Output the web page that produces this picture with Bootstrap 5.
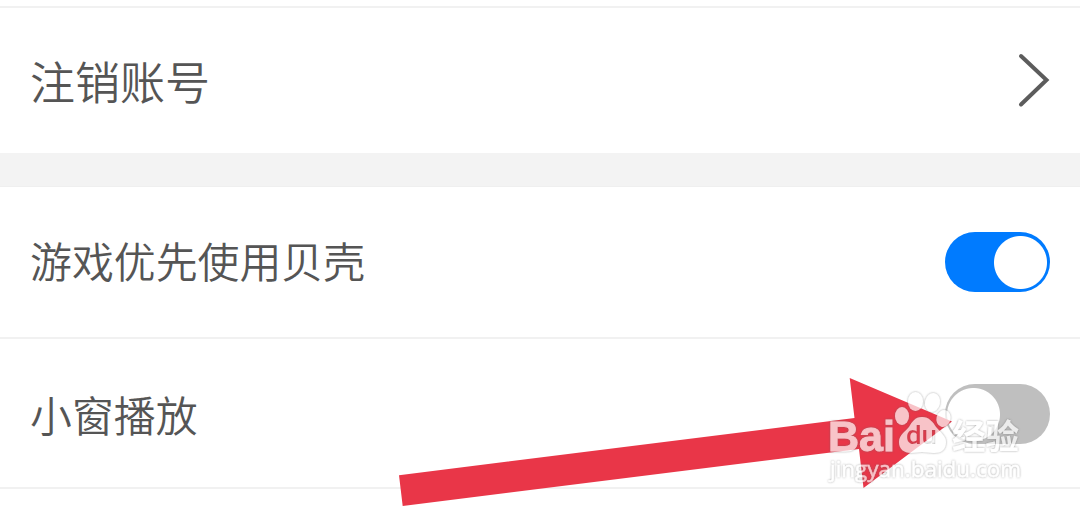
<!DOCTYPE html>
<html lang="zh-CN">
<head>
<meta charset="UTF-8">
<meta name="viewport" content="width=device-width, initial-scale=1">
<title>设置</title>
<link href="https://cdn.jsdelivr.net/npm/bootstrap@5.3.3/dist/css/bootstrap.min.css" rel="stylesheet">
<style>
  body {
    font-family: "Noto Sans CJK SC", sans-serif;
    font-weight: 350;
    color: #555;
    background: #fff;
  }
  .screen { height: 507px; }
  .settings-row {
    padding: 0 30px;
    font-size: 41.9px;
    line-height: 1;
    border-bottom: 2px solid #f1f1f1;
  }
  .strip-top { height: 8px; border-bottom: 2px solid #f1f1f1; }
  .row-account { height: 145px; font-size: 45px; border-bottom: 0; }
  .row-game { height: 152px; }
  .row-game label { padding-bottom: 5px; }
  .row-window { height: 150px; padding-top: 2px; }
  .row-window label { padding-bottom: 1px; }
  .section-gap { height: 34px; background: #f3f3f3; border-bottom: 1px solid #efefef; }
  .form-switch .form-check-input.toggle {
    width: 105px;
    height: 60px;
    margin: 0;
    border: 0;
    border-radius: 30px;
    background-color: #bfbfbf;
    background-image: radial-gradient(circle at 28.5px 30.5px, #fff 26px, transparent 27px);
    background-position: 0 0;
    background-size: 100% 100%;
    box-shadow: none;
  }
  .form-switch .form-check-input.toggle:checked {
    background-color: #007bff;
    background-image: radial-gradient(circle at 75.5px 30.5px, #fff 26px, transparent 27px);
  }
  .overlay { pointer-events: none; }
  .wm-latin { font-family: "Liberation Sans", sans-serif; font-weight: 700; }
  .wm-du { font-family: Roboto, sans-serif; font-weight: 500; }
  .wm-url { font-family: "Open Sans", sans-serif; font-weight: 400; }
  .wm-cn { font-family: "Noto Sans CJK SC", sans-serif; font-weight: 700; }
</style>
</head>

<body>

<div class="screen position-relative overflow-hidden">
  <div class="strip-top"></div>

  <div class="settings-row row-account d-flex align-items-center justify-content-between">
    <span>注销账号</span>
    <svg width="32" height="56" viewBox="0 0 32 56" fill="none" stroke="#5c5c5c" stroke-width="4" stroke-linecap="round">
      <path d="M3 3 28.5 27 3 51.500"/>
    </svg>
  </div>

  <div class="section-gap"></div>

  <div class="settings-row row-game d-flex align-items-center justify-content-between">
    <label for="game">游戏优先使用贝壳</label>
    <div class="form-check form-switch d-flex p-0 m-0">
      <input class="form-check-input toggle" type="checkbox" role="switch" id="game" checked>
    </div>
  </div>

  <div class="settings-row row-window d-flex align-items-center justify-content-between">
    <label for="window">小窗播放</label>
    <div class="form-check form-switch d-flex p-0 m-0">
      <input class="form-check-input toggle" type="checkbox" role="switch" id="window">
    </div>
  </div>

  <!-- arrow and watermark lie over the list -->
  <svg class="overlay position-absolute top-0 start-0" width="1080" height="507" viewBox="0 0 1080 507">
    <defs>
      <filter id="edge" x="-5%" y="-10%" width="110%" height="120%">
        <feDropShadow dx="0" dy="0" stdDeviation="0.9" flood-color="#666" flood-opacity="0.85"/>
      </filter>
      <mask id="paw" maskUnits="userSpaceOnUse" x="880" y="380" width="90" height="90">
        <rect x="880" y="380" width="90" height="90" fill="#fff"/>
        <text class="wm-du" x="906" y="444" font-size="25" textLength="31" lengthAdjust="spacingAndGlyphs" fill="#000">du</text>
      </mask>
    </defs>

    <path fill="#e93648" d="M399 475.3 854.5 418 849.7 378 952 421.5 863.5 488 859 449 402.7 506Z"/>

    <g opacity="0.7" fill="#fff" filter="url(#edge)">
      <text class="wm-latin" x="828" y="451" font-size="42" textLength="67" lengthAdjust="spacingAndGlyphs" stroke="#fff" stroke-width="0.8">Bai</text>
      <g mask="url(#paw)">
        <ellipse cx="902" cy="416" rx="7" ry="9"/>
        <ellipse cx="915.500" cy="401.500" rx="7.500" ry="9.500"/>
        <ellipse cx="932.500" cy="402.500" rx="7.500" ry="9.500" transform="rotate(12 932.5 402.5)"/>
        <ellipse cx="943.500" cy="418.500" rx="7" ry="8.500" transform="rotate(15 943.5 418.5)"/>
        <path d="M922 417c7 0 11 5 14 10 4 5 10 9 10 15 0 8-5 11-12 11-5 0-8-1-12-1s-7 1-11 1c-7 0-12-4-12-11s6-10 10-15c3-5 6-10 13-10Z"/>
      </g>
      <text class="wm-cn" x="952" y="449" font-size="34" textLength="67" lengthAdjust="spacingAndGlyphs">经验</text>
      <text class="wm-url" x="830" y="477" font-size="22.500" textLength="191" lengthAdjust="spacingAndGlyphs" stroke="#fff" stroke-width="0.4">jingyan.baidu.com</text>
    </g>
  </svg>
</div>

<script src="https://cdn.jsdelivr.net/npm/bootstrap@5.3.3/dist/js/bootstrap.bundle.min.js"></script>
</body>
</html>
